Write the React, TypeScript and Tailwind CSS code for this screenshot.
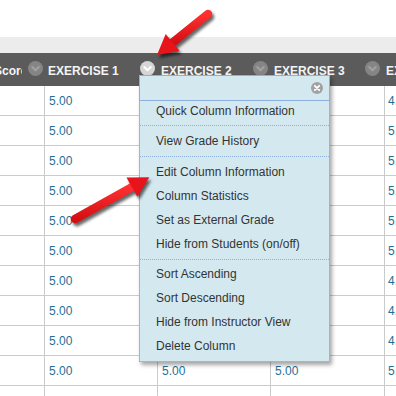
import React from "react";

const col4 = ["4.00", "5.00", "5.00", "5.00", "5.00", "5.00", "4.00", "4.00", "4.00", "5.00", "5.00"];

function Chevron({ active }: { active?: boolean }) {
  return (
    <svg width="15" height="15" viewBox="0 0 15 15" className="shrink-0 -mt-[2px]">
      <circle cx="7.5" cy="7.5" r="7.5" fill={active ? "#d6d6d6" : "#858585"} />
      <polyline
        points="4.3,6 7.5,9.2 10.7,6"
        fill="none"
        stroke={active ? "#ffffff" : "#a2a2a2"}
        strokeWidth="2"
        strokeLinecap="round"
        strokeLinejoin="round"
      />
    </svg>
  );
}

function MenuItem({ children }: { children: React.ReactNode }) {
  return <div className="h-[24px] leading-[24px] pl-[16px] text-[12px] text-[#333333]">{children}</div>;
}

export default function App() {
  const rows = Array.from({ length: 11 }, (_, i) => i);
  return (
    <div className="relative w-[396px] h-[396px] overflow-hidden bg-white font-['Liberation_Sans',Arial,sans-serif]">
      <div className="h-[37px] bg-white" />
      <div className="h-[16px] bg-[#ececec]" />
      {/* header */}
      <div className="grid grid-cols-[45px_113px_113px_114px_120px] h-[33px] bg-[#5b5b5b] text-[12px] font-bold text-[#f4f4f4] whitespace-nowrap">
        <div className="flex items-center">
          <div className="w-[22px] overflow-hidden pt-[3px]">
            <span className="block ml-[-6px]">Score</span>
          </div>
          <div className="ml-[6px] flex">
            <Chevron />
          </div>
        </div>
        <div className="flex items-center justify-between pl-[3px] pr-[3px]">
          <span className="pt-[3px]">EXERCISE 1</span>
          <Chevron active />
        </div>
        <div className="flex items-center justify-between pl-[3px] pr-[3px]">
          <span className="pt-[3px]">EXERCISE 2</span>
          <Chevron />
        </div>
        <div className="flex items-center justify-between pl-[3px] pr-[5px]">
          <span className="pt-[3px]">EXERCISE 3</span>
          <Chevron />
        </div>
        <div className="flex items-center pl-[1px]">
          <span className="pt-[3px]">EXERCISE 4</span>
        </div>
      </div>
      {/* body */}
      {rows.map((i) => (
        <div
          key={i}
          className="grid grid-cols-[45px_113px_113px_114px_120px] h-[30px] border-b border-[#cbcbcb] text-[12px] text-[#1f6f96]"
        >
          <div className="border-r border-[#cbcbcb]" />
          <div className="border-r border-[#cbcbcb] flex items-center pl-[4px]">5.00</div>
          <div className="border-r border-[#cbcbcb] flex items-center pl-[4px]">5.00</div>
          <div className="border-r border-[#cbcbcb] flex items-center pl-[4px]">5.00</div>
          <div className="flex items-center pl-[3px]">{col4[i]}</div>
        </div>
      ))}

      {/* context menu */}
      <div className="absolute left-[139px] top-[75px] w-[191px] z-10 bg-[#d4e9ef] border border-[#a6b6bb] shadow-[2px_3px_4px_rgba(0,0,0,0.35)]">
        <div className="-mx-px -mt-px h-[26px] border border-[#8cb0de] flex items-center justify-end pr-[6px]">
          <svg width="12" height="12" viewBox="0 0 12 12">
            <circle cx="6" cy="6" r="6" fill="#a2a2a2" />
            <path d="M3.8 3.8 L8.2 8.2 M8.2 3.8 L3.8 8.2" stroke="#ffffff" strokeWidth="1.8" strokeLinecap="round" />
          </svg>
        </div>
        <div className="pt-[1px] pb-[4px]">
          <div className="h-[19px] leading-[19px] pl-[16px] text-[12px] text-[#333333]">Quick Column Information</div>
        </div>
        <div className="border-t border-dotted border-[#8fb0d8] pt-[3px] pb-[3px]">
          <MenuItem>View Grade History</MenuItem>
        </div>
        <div className="border-t border-dotted border-[#8fb0d8] pt-[3px] pb-[3px]">
          <MenuItem>Edit Column Information</MenuItem>
          <MenuItem>Column Statistics</MenuItem>
          <MenuItem>Set as External Grade</MenuItem>
          <MenuItem>Hide from Students (on/off)</MenuItem>
        </div>
        <div className="border-t border-dotted border-[#8fb0d8] pt-[2px] pb-[3px]">
          <MenuItem>Sort Ascending</MenuItem>
          <MenuItem>Sort Descending</MenuItem>
          <MenuItem>Hide from Instructor View</MenuItem>
          <MenuItem>Delete Column</MenuItem>
        </div>
      </div>

      {/* red arrows */}
      <svg className="absolute left-0 top-0 z-20 pointer-events-none" width="396" height="396" viewBox="0 0 396 396">
        <defs>
          <filter id="sh" x="-20%" y="-20%" width="140%" height="140%">
            <feGaussianBlur stdDeviation="1.5" />
          </filter>
          <linearGradient id="rg" x1="0" y1="0" x2="0" y2="1">
            <stop offset="0" stopColor="#ff3030" />
            <stop offset="1" stopColor="#d40f14" />
          </linearGradient>
        </defs>
        <g transform="translate(2 3)" filter="url(#sh)" opacity="0.6">
          <line x1="208" y1="14" x2="172.6" y2="42.5" stroke="#000" strokeWidth="8.5" strokeLinecap="round" />
          <polygon points="157,55 179.5,51.1 165.7,33.9" fill="#000" />
          <line x1="75" y1="219" x2="131.9" y2="187.1" stroke="#000" strokeWidth="8.5" strokeLinecap="round" />
          <polygon points="149.3,177.3 137.3,196.7 126.5,177.5" fill="#000" />
        </g>
        <line x1="208" y1="14" x2="172.6" y2="42.5" stroke="url(#rg)" strokeWidth="8.5" strokeLinecap="round" />
        <polygon points="157,55 179.5,51.1 165.7,33.9" fill="#e8141b" />
        <line x1="75" y1="219" x2="131.9" y2="187.1" stroke="url(#rg)" strokeWidth="8.5" strokeLinecap="round" />
        <polygon points="149.3,177.3 137.3,196.7 126.5,177.5" fill="#e8141b" />
      </svg>
    </div>
  );
}
